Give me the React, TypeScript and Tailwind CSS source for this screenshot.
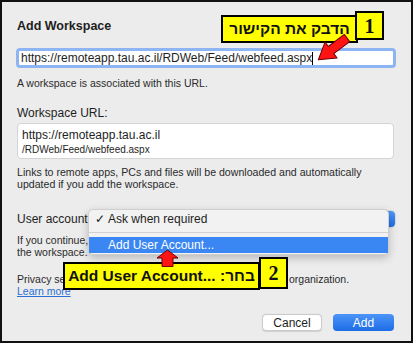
export default function App() {
  return (
    <div className="w-[416px] h-[347px] bg-white font-['Liberation_Sans',Arial,sans-serif] text-[#1e1e1e]">
      <div className="relative w-[413px] h-[343px] border-2 border-[#111] bg-[#ececec] pl-[15px] pr-[16px] pt-[16px] overflow-hidden">
        <div className="text-[12.5px] leading-[17px] font-bold">Add Workspace</div>

        <div className="mt-[13px] -mx-px h-[20px] border-[3px] border-[#8db4f3] rounded-[4px] bg-white flex items-center pl-[2px] text-[12px] leading-[14px] whitespace-nowrap">
          <span>https://remoteapp.tau.ac.il/RDWeb/Feed/webfeed.aspx</span>
          <span className="w-px h-[13px] bg-black" />
        </div>

        <div className="mt-[8px] text-[10.5px] leading-[14px] text-[#2a2a2a]">A workspace is associated with this URL.</div>

        <div className="mt-[14.5px] text-[12px] leading-[16px]">Workspace URL:</div>

        <div className="mt-[2.5px] mr-px h-[36px] bg-white border border-[#d4d4d4] rounded-[4px] pl-[4px] pt-[4px]">
          <div className="text-[12px] leading-[15px]">https://remoteapp.tau.ac.il</div>
          <div className="text-[10px] leading-[14px]">/RDWeb/Feed/webfeed.aspx</div>
        </div>

        <div className="mt-[6.5px] text-[10.6px] leading-[12px] text-[#2a2a2a] whitespace-nowrap">
          Links to remote apps, PCs and files will be downloaded and automatically
          <br />
          updated if you add the workspace.
        </div>

        <div className="mt-[21px] h-[17px] flex items-center">
          <span className="text-[12px] leading-[16px] whitespace-nowrap">User account</span>
          <div className="ml-[2px] flex-1 h-[16px] flex bg-white rounded-[4px] shadow-[0_0_0_0.5px_#c4c4c4]">
            <div className="flex-1" />
            <div className="w-[16px] h-full rounded-r-[4px] bg-gradient-to-b from-[#4f97f8] to-[#1f6de6]" />
          </div>
        </div>

        <div className="mt-[6px] text-[10.5px] leading-[12px] text-[#2a2a2a] whitespace-nowrap">
          If you continue, you'll be asked for credentials when you connect to
          <br />
          the workspace.
        </div>

        <div className="mt-[15.5px] text-[10.5px] leading-[12px] text-[#2a2a2a] whitespace-nowrap">
          <span className="inline-block w-[272px] overflow-hidden align-bottom">Privacy settings for this workspace are managed by</span>
          organization.
        </div>
        <div className="text-[10.5px] leading-[12px] text-[#2a6fd6] underline">Learn more</div>

        <div className="mt-[17px] mr-px flex justify-end gap-[11px]">
          <div className="w-[60px] h-[17px] bg-white rounded-[4px] border border-[#cacaca] shadow-[0_0.5px_1px_rgba(0,0,0,0.12)] flex items-center justify-center text-[12px]">
            Cancel
          </div>
          <div className="w-[61px] h-[17px] rounded-[4px] bg-gradient-to-b from-[#4b94f8] to-[#1d6ce6] flex items-center justify-center text-[12px] text-white">
            Add
          </div>
        </div>

        {/* dropdown menu */}
        <div className="absolute left-[86px] top-[207px] w-[301px] h-[46px] bg-[#f2f2f2] border border-[#cfcfcf] rounded-[5px] shadow-[0_3px_8px_rgba(0,0,0,0.22)] text-[12px]">
          <div className="h-[18px] flex items-center pl-[6px]">
            <span className="w-[13px]">✓</span>
            <span>Ask when required</span>
          </div>
          <div className="mt-[3.5px] h-px bg-[#d2d2d2]" />
          <div className="mt-[4.5px] h-[16px] bg-[#3a86f3] text-white flex items-center pl-[19px]">
            Add User Account...
          </div>
        </div>

        {/* callout 1 */}
        <div className="absolute left-[219px] top-[13px] w-[137px] h-[28px] bg-[#ffff00] border-2 border-black flex items-center justify-center text-[15.5px] font-bold text-[#111] whitespace-nowrap" dir="rtl">
          הדבק את הקישור
        </div>
        <div className="absolute left-[353px] top-[9px] w-[29px] h-[29px] bg-[#ffff00] border-2 border-black flex items-center justify-center font-['Liberation_Serif',serif] font-bold text-[20px] text-[#111]">
          1
        </div>
        <svg className="absolute left-[306px] top-[28px]" width="47" height="34" viewBox="0 0 47 34">
          <g transform="translate(39 8) rotate(142.8)">
            <polygon points="0,-4.5 20,-4.5 20,-10 36,0 20,10 20,4.5 0,4.5" fill="#ff1414" stroke="#6b0000" strokeWidth="1" strokeLinejoin="round" />
          </g>
        </svg>

        {/* callout 2 */}
        <div className="absolute left-[61px] top-[260px] w-[197px] h-[28px] bg-[#ffff00] border-2 border-black flex items-center justify-center text-[15.5px] font-bold text-[#111] whitespace-nowrap" dir="rtl">
          <span>
            בחר: <bdi>Add User Account...</bdi>
          </span>
        </div>
        <div className="absolute left-[257px] top-[255px] w-[29px] h-[32px] bg-[#ffff00] border-2 border-black flex items-center justify-center font-['Liberation_Serif',serif] font-bold text-[20px] text-[#111]">
          2
        </div>
        <svg className="absolute left-[153px] top-[246px]" width="26" height="21" viewBox="0 0 26 21">
          <polygon points="12.5,2 23,10 18,10 18,18.5 7,18.5 7,10 2,10" fill="#ff1414" stroke="#6b0000" strokeWidth="1" strokeLinejoin="round" />
        </svg>
      </div>
    </div>
  );
}
